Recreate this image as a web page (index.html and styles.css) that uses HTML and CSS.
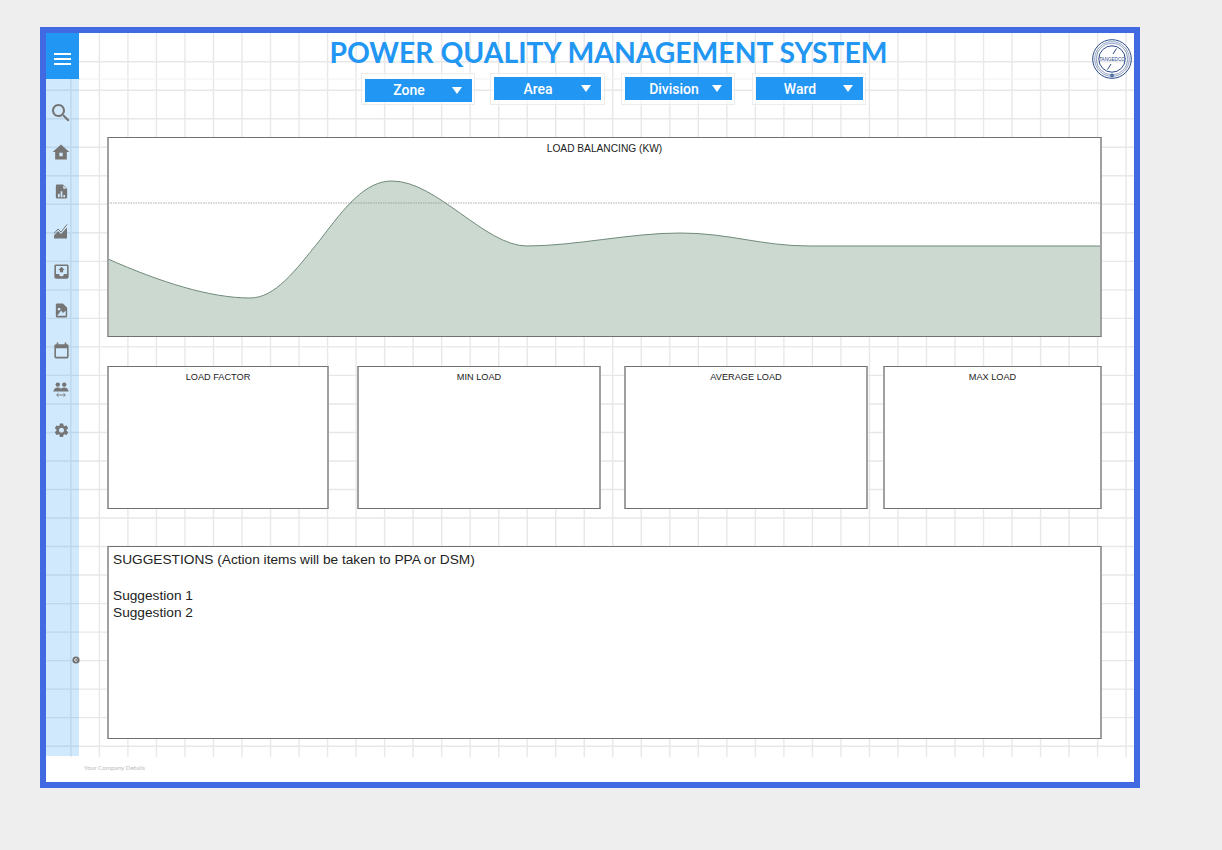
FILE: index.html
```html
<!DOCTYPE html>
<html lang="en">
<head>
<meta charset="utf-8">
<title>Power Quality Management System</title>
<link rel="stylesheet" href="styles.css">
</head>
<body>
<div class="frame">
  <svg class="grid" viewBox="46 33 1088 749" aria-hidden="true">
    <path class="grid-line" d="M70.88 33V757M99.4 33V757M127.92 33V757M156.44 33V757M184.96 33V757M213.48 33V757M242 33V757M270.52 33V757M299.04 33V757M327.56 33V757M356.08 33V757M384.6 33V757M413.12 33V757M441.64 33V757M470.16 33V757M498.68 33V757M527.2 33V757M555.72 33V757M584.24 33V757M612.76 33V757M641.28 33V757M669.8 33V757M698.32 33V757M726.84 33V757M755.36 33V757M783.88 33V757M812.4 33V757M840.92 33V757M869.44 33V757M897.96 33V757M926.48 33V757M955 33V757M983.52 33V757M1012.04 33V757M1040.56 33V757M1069.08 33V757M1097.6 33V757M1126.12 33V757"/>
    <path class="grid-line" d="M46 61.7H1134M46 90.22H1134M46 118.74H1134M46 147.26H1134M46 175.78H1134M46 204.3H1134M46 232.82H1134M46 261.34H1134M46 289.86H1134M46 318.38H1134M46 346.9H1134M46 375.42H1134M46 403.94H1134M46 432.46H1134M46 460.98H1134M46 489.5H1134M46 518.02H1134M46 546.54H1134M46 575.06H1134M46 603.58H1134M46 632.1H1134M46 660.62H1134M46 689.14H1134M46 717.66H1134M46 746.18H1134"/>
    <path class="grid-divider" d="M79 79H1092"/>
  </svg>

  <div class="workspace">
    <aside class="sidebar">
      <div class="menu-btn">
        <svg class="menu-icon" viewBox="0 0 17 12"><path d="M0 0h17v2H0zM0 5h17v2H0zM0 10h17v2H0z"/></svg>
      </div>
      <nav class="nav">
        <div class="nav-item"><svg class="ic ic-24" viewBox="0 0 24 24"><path d="M15.5 14h-.79l-.28-.27C15.41 12.59 16 11.11 16 9.5 16 5.91 13.09 3 9.5 3S3 5.91 3 9.5 5.91 16 9.5 16c1.61 0 3.09-.59 4.23-1.57l.27.28v.79l5 4.99L20.49 19l-4.99-5zm-6 0C7.01 14 5 11.99 5 9.5S7.01 5 9.5 5 14 7.01 14 9.5 11.99 14 9.5 14z"/></svg></div>
        <div class="nav-item"><svg class="ic ic-20" viewBox="0 0 24 24"><path fill-rule="evenodd" d="M12 3 2 12h3v9h14v-9h3zM10 13h4v4h-4z"/></svg></div>
        <div class="nav-item"><svg class="ic ic-17" viewBox="0 0 24 24"><path fill-rule="evenodd" d="M6 2h8l6 6v12a2 2 0 0 1-2 2H6a2 2 0 0 1-2-2V4a2 2 0 0 1 2-2zM7 20h2.4v-5H7zM10.8 20h2.4v-8.500h-2.400zM14.600 20H17v-3h-2.400zM14.500 3.500v4.500H19z"/></svg></div>
        <div class="nav-item"><svg class="ic ic-16" viewBox="0 1 16 16"><path d="M1 15.500v-3l4-4.500 3 3 6-6.500v11z"/><path class="ic-line" d="M1 10.500 5 6l3 3 6-7.500"/></svg></div>
        <div class="nav-item"><svg class="ic ic-19" viewBox="0 0 24 24"><path d="M19 3H5C3.900 3 3 3.900 3 5v14c0 1.100.9 2 2 2h14c1.100 0 2-.9 2-2V5c0-1.100-.9-2-2-2zm0 12h-4c0 1.660-1.350 3-3 3s-3-1.340-3-3H5V5h14v10z"/><path d="M16 10h-2v3h-4v-3H8l4-4z"/></svg></div>
        <div class="nav-item"><svg class="ic ic-17" viewBox="0 0 24 24"><path fill-rule="evenodd" d="M6 2h8l6 6v12a2 2 0 0 1-2 2H6a2 2 0 0 1-2-2V4a2 2 0 0 1 2-2zM6 19.500h12v-7l-4 3-2.500-3.500zM8.500 8a2 2 0 1 0 .01 0z"/></svg></div>
        <div class="nav-item"><svg class="ic ic-19" viewBox="0 0 24 24"><path d="M19 4h-1V2h-2v2H8V2H6v2H5C3.900 4 3 4.900 3 6v14c0 1.100.9 2 2 2h14c1.100 0 2-.9 2-2V6c0-1.100-.9-2-2-2zm0 16H5V9h14v11z"/></svg></div>
        <div class="nav-item"><svg class="ic ic-16" viewBox="0 0 16 16"><circle cx="4.800" cy="2.600" r="2.200"/><circle cx="11.200" cy="2.600" r="2.200"/><path d="M.3 9.500C.8 6.800 2.500 5.500 4.800 5.500c1.300 0 2.400.4 3.200 1.200.8-.8 1.900-1.200 3.200-1.200 2.300 0 4 1.300 4.500 4z"/><path class="ic-thin" d="M4 13h8M5.500 11.300 3.600 13l1.900 1.700M10.500 11.300 12.400 13l-1.900 1.700"/></svg></div>
        <div class="nav-item"><svg class="ic ic-17" viewBox="0 -1 24 24"><path d="M19.140 12.940c.04-.3.06-.61.06-.94 0-.32-.02-.64-.07-.94l2.030-1.580c.18-.14.23-.41.12-.61l-1.920-3.320c-.12-.22-.37-.29-.59-.22l-2.390.96c-.5-.38-1.030-.7-1.620-.94l-.36-2.540c-.04-.24-.24-.41-.48-.41h-3.840c-.24 0-.43.17-.47.41l-.36 2.540c-.59.24-1.130.57-1.620.94l-2.390-.96c-.22-.08-.47 0-.59.22L2.740 8.870c-.12.21-.08.47.12.61l2.030 1.580c-.05.3-.09.63-.09.94s.02.64.07.94l-2.030 1.580c-.18.14-.23.41-.12.61l1.920 3.320c.12.22.37.29.59.22l2.390-.96c.5.38 1.030.7 1.620.94l.36 2.540c.05.24.24.41.48.41h3.840c.24 0 .44-.17.47-.41l.36-2.540c.59-.24 1.130-.56 1.620-.94l2.390.96c.22.08.47 0 .59-.22l1.920-3.320c.12-.22.07-.47-.12-.61l-2.010-1.580zM12 15.600c-1.980 0-3.600-1.620-3.600-3.600s1.620-3.600 3.600-3.600 3.600 1.620 3.600 3.600-1.620 3.600-3.600 3.600z"/></svg></div>
      </nav>
      <svg class="toggle" viewBox="0 0 8 8"><circle cx="4" cy="4" r="3.600"/><path class="toggle-mark" d="M5.400 3.200C4.800 2.400 2.700 2.500 2.500 4c.2 1.500 2.300 1.600 2.900.8"/></svg>
    </aside>

    <main class="main">
      <header class="header">
        <h1 class="title">POWER QUALITY MANAGEMENT SYSTEM</h1>
        <svg class="logo" viewBox="0 0 40 40">
          <g class="logo-rings">
            <circle cx="20" cy="20" r="19.300"/>
            <circle cx="20" cy="20" r="17.300" class="logo-fine"/>
            <circle cx="20" cy="20" r="15.800" class="logo-fine"/>
            <circle cx="20" cy="20" r="13.200"/>
            <path d="M24.500 9.500 21 15M19 25l-3.500 5.500"/>
          </g>
          <text class="logo-text" x="20" y="21.600" text-anchor="middle">TANGEDCO</text>
          <circle class="logo-seal" cx="20" cy="36.500" r="2"/>
        </svg>
      </header>

      <div class="filters">
        <div class="filter filter-zone"><div class="select"><span class="select-label">Zone</span><span class="caret"></span></div></div>
        <div class="filter filter-area"><div class="select"><span class="select-label">Area</span><span class="caret"></span></div></div>
        <div class="filter filter-division"><div class="select"><span class="select-label select-label-wide">Division</span><span class="caret"></span></div></div>
        <div class="filter filter-ward"><div class="select"><span class="select-label">Ward</span><span class="caret"></span></div></div>
      </div>

      <section class="panel chart-panel">
        <svg class="chart" viewBox="109 138 991 198" preserveAspectRatio="none">
          <path class="area" d="M108 259C160 282 210 298 250 298C275 298 295 271 320 240C345 207 365 181 392 181C437 181 485 246 527 246C575 246 630 233 680 233C730 233 760 246 810 246L1101 246V337H108Z"/>
          <path class="curve" d="M108 259C160 282 210 298 250 298C275 298 295 271 320 240C345 207 365 181 392 181C437 181 485 246 527 246C575 246 630 233 680 233C730 233 760 246 810 246L1101 246"/>
          <path class="threshold" d="M108 203H1101"/>
        </svg>
        <h2 class="panel-title chart-title">LOAD BALANCING (KW)</h2>
      </section>

      <div class="stats">
        <section class="panel stat stat-factor"><h2 class="panel-title">LOAD FACTOR</h2></section>
        <section class="panel stat stat-min"><h2 class="panel-title">MIN LOAD</h2></section>
        <section class="panel stat stat-avg"><h2 class="panel-title">AVERAGE LOAD</h2></section>
        <section class="panel stat stat-max"><h2 class="panel-title">MAX LOAD</h2></section>
      </div>

      <section class="panel suggestions">
        <p class="suggestions-head">SUGGESTIONS (Action items will be taken to PPA or DSM)</p>
        <p>Suggestion 1</p>
        <p>Suggestion 2</p>
      </section>
    </main>
  </div>

  <footer class="footer">Your Company Details</footer>
</div>
</body>
</html>
```

FILE: styles.css
```css
* { box-sizing: border-box; }

html, body {
  margin: 0;
  height: 100%;
}

body {
  background: #eeeeee;
  overflow: hidden;
  padding: 27px 0 0 40px;
  font-family: "Liberation Sans", Arial, sans-serif;
}

.frame {
  position: relative;
  width: 1100px;
  height: 761px;
  border: 6px solid #4169e1;
  background: #ffffff;
}

.grid {
  position: absolute;
  inset: 0;
  width: 100%;
  height: 100%;
}

.grid-line {
  fill: none;
  stroke: #e8e8e8;
  stroke-width: 1.4;
}

.grid-divider {
  fill: none;
  stroke: #f1f1f1;
  stroke-width: 1;
}

.workspace {
  position: relative;
  display: flex;
  height: 723px;
}

/* Sidebar */
.sidebar {
  position: relative;
  flex: 0 0 33px;
  background: rgba(33, 150, 243, 0.21);
}

.menu-btn {
  display: flex;
  align-items: center;
  justify-content: center;
  height: 46px;
  padding: 5px 1px 0 0;
  background: #2196f3;
}

.menu-icon {
  width: 17px;
  height: 12px;
  fill: #ffffff;
}

.nav {
  display: grid;
  grid-auto-rows: 39.6px;
  padding-top: 14px;
}

.nav-item {
  display: flex;
  align-items: center;
  justify-content: center;
  padding-right: 3px;
}

.ic { fill: #757575; display: block; }
.ic-24 { width: 24px; height: 24px; }
.ic-20 { width: 20px; height: 20px; }
.ic-19 { width: 19px; height: 19px; }
.ic-17 { width: 17px; height: 17px; }
.ic-16 { width: 16px; height: 16px; }

.ic-line {
  fill: none;
  stroke: #757575;
  stroke-width: 1;
}

.ic-thin {
  fill: none;
  stroke: #757575;
  stroke-width: 0.9;
}

.toggle {
  position: absolute;
  left: 26px;
  top: 623px;
  width: 8px;
  height: 8px;
  fill: #6f6f6f;
}

.toggle-mark {
  fill: none;
  stroke: #ffffff;
  stroke-width: 0.9;
}

/* Main column */
.main {
  flex: 1;
  min-width: 0;
  padding: 0 32px 0 28px;
}

.header {
  position: relative;
  height: 40px;
}

.title {
  margin: 0;
  padding: 2px 0 0 8px;
  text-align: center;
  font-family: Lato, sans-serif;
  font-weight: 700;
  font-size: 28.3px;
  line-height: 35px;
  color: #2196f3;
  white-space: nowrap;
}

.logo {
  position: absolute;
  right: -30px;
  top: 6px;
  width: 40px;
  height: 40px;
}

.logo-rings {
  fill: none;
  stroke: #2a4a8a;
  stroke-width: 1;
}

.logo-fine { stroke-width: 0.5; }

.logo-text {
  font-family: "Liberation Sans", Arial, sans-serif;
  font-size: 4.6px;
  fill: #2a4a8a;
}

.logo-seal { fill: #2a4a8a; opacity: 0.7; }

/* Filters */
.filters {
  display: flex;
  height: 32px;
}

.filter {
  width: 114px;
  height: 32px;
  padding: 3px;
  border: 1px solid #ececec;
  background: rgba(255, 255, 255, 0.6);
}

.filter-zone { margin-left: 254px; padding-top: 5px; }
.filter-zone .select { padding-bottom: 1px; }
.filter-area { margin-left: 15px; width: 115px; }
.filter-division { margin-left: 16px; }
.filter-ward { margin-left: 17px; }

.select {
  position: relative;
  display: flex;
  align-items: center;
  height: 23px;
  width: 107px;
  background: #2196f3;
}

.select-label {
  font-family: Roboto, sans-serif;
  font-weight: 500;
  font-size: 14px;
  color: #ffffff;
  width: 88px;
  text-align: center;
}

.select-label-wide { padding-left: 10px; }

.caret {
  width: 0;
  height: 0;
  margin-left: -1.5px;
  border-left: 5.5px solid transparent;
  border-right: 5.5px solid transparent;
  border-top: 7px solid #ffffff;
}

/* Panels */
.panel {
  position: relative;
  background: #ffffff;
  border-style: solid;
  border-color: #707070 #a0a0a0;
  border-width: 1px 2px;
}

.panel-title {
  margin: 0;
  padding-top: 4px;
  text-align: center;
  font-weight: 400;
  font-size: 9.2px;
  line-height: 12px;
  color: #222222;
}

.chart-panel {
  height: 200px;
  margin-top: 32px;
}

.chart {
  position: absolute;
  inset: 0;
  width: 100%;
  height: 100%;
}

.chart-title {
  position: relative;
  padding-top: 5px;
  font-size: 10.2px;
}

.area { fill: #ccd9d0; }

.curve {
  fill: none;
  stroke: #6f8a7b;
  stroke-width: 1;
}

.threshold {
  fill: none;
  stroke: #8a8a8a;
  stroke-width: 1;
  stroke-dasharray: 1.5 1;
  opacity: 0.7;
}

.stats {
  display: flex;
  margin-top: 29px;
}

.stat { height: 143px; }
.stat-factor { width: 222px; }
.stat-min { width: 244px; margin-left: 28px; }
.stat-avg { width: 244px; margin-left: 23px; }
.stat-max { width: 219px; margin-left: 15px; }

.suggestions {
  height: 193px;
  margin-top: 37px;
  padding: 4px 4px;
  font-size: 13.7px;
  line-height: 17.5px;
  color: #222222;
}

.suggestions p { margin: 0; }
.suggestions-head { padding-bottom: 18px; }

/* Footer */
.footer {
  position: relative;
  height: 26px;
  padding: 7px 0 0 38px;
  font-family: Lato, sans-serif;
  font-size: 6.3px;
  line-height: 10px;
  color: #bcbcbc;
}
```
